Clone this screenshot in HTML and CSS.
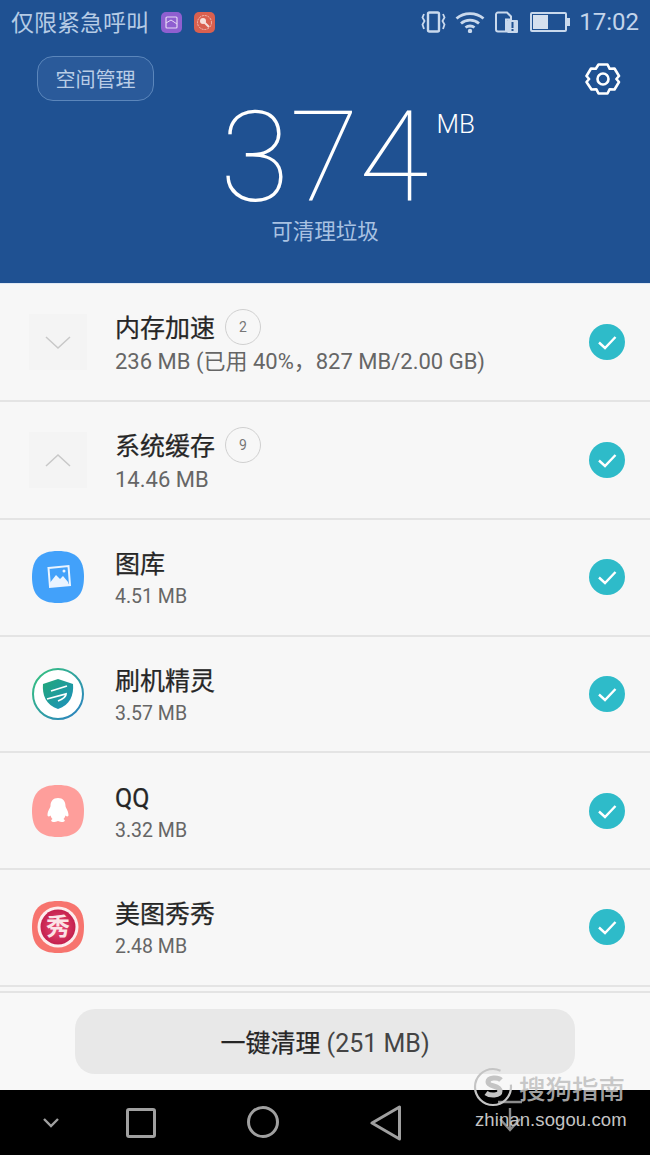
FILE: index.html
```html
<!DOCTYPE html>
<html lang="en">

<head>
    <meta charset="UTF-8">
    <title>手机管家</title>
    <link rel="stylesheet" href="styles.css">
</head>

<body>
    <div class="phone">
        <header class="top">
            <div class="status">
                <div class="status-left">
                    <span class="carrier">仅限紧急呼叫</span>
                    <svg class="note" viewBox="0 0 21 21"><rect width="21" height="21" rx="5" fill="#8f5fd0"/><rect x="5" y="5" width="11" height="11" rx="1" fill="none" stroke="#e6d8f5" stroke-width="1.2"/><path d="M5 11l5-3 6 4" fill="none" stroke="#e6d8f5"/></svg>
                    <svg class="note" viewBox="0 0 21 21"><rect width="21" height="21" rx="5" fill="#d9604f"/><circle cx="10.5" cy="10.5" r="7" fill="none" stroke="#f3c3ba" stroke-dasharray="2 1"/><circle cx="9" cy="9" r="3" fill="#f6e1dc"/><path d="M10 10l5 5" stroke="#f6e1dc" stroke-width="2"/></svg>
                </div>
                <div class="status-right">
                    <svg class="ic-vibrate" viewBox="0 0 25 22" fill="none" stroke="#c9d9ed" stroke-width="2.400"><rect x="7" y="1.500" width="11" height="19" rx="1.500"/><path d="M3 3L1.500 6.500 3.500 10 1.500 13.500 3 18M22 3l1.500 3.500-2 3.500 2 3.500-1.500 4.500" stroke-width="1.800"/></svg>
                    <svg class="ic-wifi" viewBox="0 0 30 22" fill="none" stroke="#c9d9ed" stroke-width="2.800"><path d="M1.500 7.500C9 1 21 1 28.500 7.500M6 12.500c5-4.500 13-4.500 18 0M10.500 16.500c2.500-2 6.500-2 9 0"/><circle cx="15" cy="20" r="2.200" fill="#c9d9ed" stroke="none"/></svg>
                    <svg class="ic-sim" viewBox="0 0 24 22"><path d="M1 3.500A2 2 0 0 1 3 1.500h9l4 4v3h-5v12H3a2 2 0 0 1-2-2z" fill="none" stroke="#c9d9ed" stroke-width="2"/><rect x="12" y="9" width="11" height="13" rx="1" fill="#c9d9ed"/><rect x="16.500" y="11" width="2" height="6" fill="#1f5192"/><rect x="16.500" y="18" width="2" height="2" fill="#1f5192"/></svg>
                    <div class="battery"><div class="battery-level"></div></div>
                    <span class="clock">17:02</span>
                </div>
            </div>
            <div class="tools">
                <button class="manage">空间管理</button>
                <svg class="gear" viewBox="0 0 36 36" fill="none" stroke="#fff" stroke-width="2.600" stroke-linejoin="round"><path d="M13.500 3.500h9l2.200 4.300 4.800-.3 4.500 7.500-2.600 3 2.600 3-4.500 7.500-4.800-.3-2.200 4.300h-9l-2.200-4.300-4.800.3L1.500 21l2.600-3-2.600-3L6 7.500l4.800.3z"/><circle cx="18" cy="18" r="5.500"/></svg>
            </div>
            <div class="total">
                <span class="total-num">374</span>
                <span class="total-unit">MB</span>
            </div>
            <div class="total-label">可清理垃圾</div>
        </header>

        <div class="list">
            <div class="row row-group">
                <div class="thumb">
                    <svg viewBox="0 0 28 16" class="arrow" fill="none" stroke="#c8c8c8" stroke-width="1.500"><path d="M2 3l12 11L26 3"/></svg>
                </div>
                <div class="info">
                    <div class="title-line">
                        <span class="title">内存加速</span>
                        <span class="count">2</span>
                    </div>
                    <div class="size">236 MB (已用 40%，827 MB/2.00 GB)</div>
                </div>
                <svg class="check" viewBox="0 0 36 36"><circle cx="18" cy="18" r="18" fill="#2ebbc9"/><path d="M10 18.500l6 5.500 10.500-11" fill="none" stroke="#fff" stroke-width="2.400"/></svg>
            </div>
            <div class="row row-group">
                <div class="thumb">
                    <svg viewBox="0 0 28 16" class="arrow" fill="none" stroke="#c8c8c8" stroke-width="1.500"><path d="M2 14L14 3l12 11"/></svg>
                </div>
                <div class="info">
                    <div class="title-line">
                        <span class="title">系统缓存</span>
                        <span class="count">9</span>
                    </div>
                    <div class="size">14.46 MB</div>
                </div>
                <svg class="check" viewBox="0 0 36 36"><circle cx="18" cy="18" r="18" fill="#2ebbc9"/><path d="M10 18.500l6 5.500 10.500-11" fill="none" stroke="#fff" stroke-width="2.400"/></svg>
            </div>
            <div class="row">
                <div class="thumb thumb-app">
                    <svg viewBox="0 0 52 52"><path d="M26 0C44 0 52 8 52 26S44 52 26 52 0 44 0 26 8 0 26 0z" fill="#42a1fa"/><path d="M16.500 17l20-2 1.500 19-20 2z" fill="none" stroke="#eaf4ff" stroke-width="2"/><path d="M17 33l7-9 4 4 3-3 5 6 1 3-19 2z" fill="#eaf4ff"/><circle cx="32" cy="20" r="1.500" fill="#eaf4ff"/></svg>
                </div>
                <div class="info info-app">
                    <div class="title">图库</div>
                    <div class="size size-app">4.51 MB</div>
                </div>
                <svg class="check" viewBox="0 0 36 36"><circle cx="18" cy="18" r="18" fill="#2ebbc9"/><path d="M10 18.500l6 5.500 10.500-11" fill="none" stroke="#fff" stroke-width="2.400"/></svg>
            </div>
            <div class="row">
                <div class="thumb thumb-app">
                    <svg viewBox="0 0 52 52"><defs><linearGradient id="ring" x1="0" y1="0" x2="1" y2="1"><stop offset="0" stop-color="#36c47c"/><stop offset="1" stop-color="#2b7fc4"/></linearGradient><linearGradient id="shield" x1="0" y1="0" x2="1" y2="1"><stop offset="0" stop-color="#22a878"/><stop offset="1" stop-color="#1c8fc0"/></linearGradient></defs><circle cx="26" cy="26" r="25" fill="#fff" stroke="url(#ring)" stroke-width="2"/><path d="M26 11l15 5c1 11-3 21-15 25C14 37 10 27 11 16z" fill="url(#shield)"/><path d="M19 23l16-5M15 31l19-5c0 3-3 5-8 7" fill="none" stroke="#fff" stroke-width="1.800"/></svg>
                </div>
                <div class="info info-app">
                    <div class="title">刷机精灵</div>
                    <div class="size size-app">3.57 MB</div>
                </div>
                <svg class="check" viewBox="0 0 36 36"><circle cx="18" cy="18" r="18" fill="#2ebbc9"/><path d="M10 18.500l6 5.500 10.500-11" fill="none" stroke="#fff" stroke-width="2.400"/></svg>
            </div>
            <div class="row">
                <div class="thumb thumb-app">
                    <svg viewBox="0 0 52 52"><path d="M26 0C44 0 52 8 52 26S44 52 26 52 0 44 0 26 8 0 26 0z" fill="#fe9e9b"/><path d="M26 13c5 0 7.500 3.500 7.500 8 0 2 3 4.500 3 9 0 2-2 1.500-3 .5-.5 1.500-1 2.500-2 3.500 2 1 2 3-2 3-2 0-2.500-1-3.500-1s-1.500 1-3.500 1c-4 0-4-2-2-3-1-1-1.500-2-2-3.500-1 1-3 1.500-3-.5 0-4.500 3-7 3-9 0-4.500 2.500-8 7.500-8z" fill="#fff"/></svg>
                </div>
                <div class="info info-app">
                    <div class="title">QQ</div>
                    <div class="size size-app">3.32 MB</div>
                </div>
                <svg class="check" viewBox="0 0 36 36"><circle cx="18" cy="18" r="18" fill="#2ebbc9"/><path d="M10 18.500l6 5.500 10.500-11" fill="none" stroke="#fff" stroke-width="2.400"/></svg>
            </div>
            <div class="row">
                <div class="thumb thumb-app meitu">
                    <svg viewBox="0 0 52 52"><defs><radialGradient id="mt"><stop offset="0" stop-color="#ea4e78"/><stop offset="1" stop-color="#c4204d"/></radialGradient></defs><path d="M26 0C44 0 52 8 52 26S44 52 26 52 0 44 0 26 8 0 26 0z" fill="#f7746e"/><circle cx="26" cy="26" r="20.500" fill="#fdeeee"/><circle cx="26" cy="26" r="17.500" fill="url(#mt)"/></svg>
                    <span class="meitu-char">秀</span>
                </div>
                <div class="info info-app">
                    <div class="title">美图秀秀</div>
                    <div class="size size-app">2.48 MB</div>
                </div>
                <svg class="check" viewBox="0 0 36 36"><circle cx="18" cy="18" r="18" fill="#2ebbc9"/><path d="M10 18.500l6 5.500 10.500-11" fill="none" stroke="#fff" stroke-width="2.400"/></svg>
            </div>
        </div>

        <div class="bottom">
            <button class="clean"><span class="clean-name">一键清理</span> (251 MB)</button>
        </div>

        <nav class="nav">
            <svg class="nav-down" viewBox="0 0 18 12" fill="none" stroke="#a0a0a0" stroke-width="2.400"><path d="M2 2l7 7 7-7"/></svg>
            <svg class="nav-square" viewBox="0 0 30 30" fill="none" stroke="#a0a0a0" stroke-width="3"><rect x="1.500" y="1.500" width="27" height="27" rx="1.500"/></svg>
            <svg class="nav-circle" viewBox="0 0 32 32" fill="none" stroke="#a0a0a0" stroke-width="3"><circle cx="16" cy="16" r="14.500"/></svg>
            <svg class="nav-back" viewBox="0 0 32 36" fill="none" stroke="#a0a0a0" stroke-width="3" stroke-linejoin="round"><path d="M29.500 2v32L2 18z"/></svg>
            <svg class="nav-dl" viewBox="0 0 28 36" fill="none" stroke="#8c8c8c" stroke-width="2.400"><path d="M2 2h24M14 8v22M4 19l10 11 10-11"/></svg>
        </nav>

        <div class="watermark">
            <div class="wm-top">
                <svg class="wm-logo" viewBox="0 0 40 40" fill="none" stroke="#c4c4c4"><circle cx="20" cy="20" r="18" stroke-width="2.200" stroke-dasharray="92 18"/><path d="M28 13c-3-3-13-3-13 2 0 5 12 3 12 9 0 5-10 5-14 2" stroke-width="5"/></svg>
                <span class="wm-name">搜狗指南</span>
            </div>
            <div class="wm-url">zhinan.sogou.com</div>
        </div>
    </div>
</body>

</html>
```

FILE: styles.css
```css
* {
    box-sizing: border-box;
}

body {
    margin: 0;
    background-color: #f7f7f7;
    font-family: 'Roboto', 'Noto Sans CJK SC', sans-serif;
}

.phone {
    position: relative;
    width: 650px;
    height: 1155px;
    overflow: hidden;
    display: flex;
    flex-direction: column;
}

/* blue header */
.top {
    height: 284px;
    flex: none;
    background-color: #1f5192;
    border-bottom: 1px solid #dfe8f3;
    display: flex;
    flex-direction: column;
}

.status {
    height: 44px;
    flex: none;
    padding: 0 11px;
    display: flex;
    justify-content: space-between;
    align-items: center;
    color: #bdd0e8;
}

.status-left {
    display: flex;
    align-items: center;
}

.carrier {
    font-size: 23px;
    line-height: 26px;
    margin-top: 4px;
    margin-right: 12px;
    color: #b5cbe5;
}

.note {
    width: 21px;
    height: 21px;
    margin-right: 12px;
}

.status-right {
    display: flex;
    align-items: center;
}

.ic-vibrate {
    width: 25px;
    height: 22px;
    margin-right: 9px;
}

.ic-wifi {
    width: 30px;
    height: 22px;
    margin-right: 10px;
}

.ic-sim {
    width: 24px;
    height: 22px;
    margin-right: 11px;
}

.battery {
    position: relative;
    width: 37px;
    height: 20px;
    border: 2px solid #c9d9ed;
    border-radius: 2px;
    padding: 1px;
    margin-right: 12px;
}

.battery::after {
    content: "";
    position: absolute;
    right: -5px;
    top: 4px;
    width: 3px;
    height: 8px;
    background-color: #c9d9ed;
}

.battery-level {
    width: 15px;
    height: 100%;
    background-color: #d5e0ee;
}

.clock {
    font-size: 24px;
    color: #c3d4ea;
}

.tools {
    height: 45px;
    flex: none;
    margin-top: 12px;
    padding: 0 29px 0 37px;
    display: flex;
    justify-content: space-between;
    align-items: flex-start;
}

.manage {
    width: 117px;
    height: 45px;
    padding: 0;
    background-color: #2a5a9a;
    border: 1px solid #5b86bb;
    border-radius: 16px;
    color: #b9cde6;
    font-family: inherit;
    font-size: 20px;
}

.gear {
    width: 36px;
    height: 36px;
    margin-top: 5px;
}

.total {
    height: 120px;
    flex: none;
    margin-top: -3px;
    display: flex;
    justify-content: center;
    color: #fff;
}

.total-num {
    font-size: 127px;
    font-weight: 100;
    line-height: 120px;
    margin-left: 45px;
}

.total-unit {
    font-size: 26px;
    font-weight: 300;
    line-height: 30px;
    margin-top: 11px;
    margin-left: 8px;
}

.total-label {
    margin-top: 1px;
    text-align: center;
    font-size: 21.5px;
    line-height: 26px;
    color: #a9c2e2;
}

/* rows */
.list {
    height: 709px;
    flex: none;
    background-color: #f7f7f7;
    border-bottom: 2px solid #e4e4e4;
}

.row {
    height: 116.67px;
    padding: 0 25px 0 29px;
    display: flex;
    align-items: center;
    border-bottom: 2px solid #e4e4e4;
}

.row-group {
    height: 118px;
}

.thumb {
    position: relative;
    width: 58px;
    height: 56px;
    flex: none;
    margin-right: 28px;
    display: flex;
    align-items: center;
    justify-content: center;
    background-color: #f4f4f4;
}

.thumb-app {
    background: none;
}

.thumb-app svg {
    width: 52px;
    height: 52px;
}

.arrow {
    width: 28px;
    height: 16px;
}

.meitu-char {
    position: absolute;
    left: 0;
    right: 0;
    text-align: center;
    color: #fbe3e6;
    font-size: 24px;
    font-weight: 700;
    line-height: 56px;
}

.info {
    flex: 1;
    padding-top: 4px;
}

.info-app {
    padding-top: 5px;
}

.title-line {
    display: flex;
    align-items: center;
    height: 36px;
}

.title {
    font-size: 25px;
    line-height: 34px;
    color: #262626;
    -webkit-text-stroke: 0.25px #262626;
}

.count {
    width: 36px;
    height: 36px;
    margin-left: 10px;
    margin-top: -4px;
    border: 1px solid #d0d0d0;
    border-radius: 50%;
    text-align: center;
    font-size: 14px;
    line-height: 34px;
    color: #777;
}

.size {
    font-size: 22px;
    line-height: 30px;
    color: #666;
}

.size-app {
    font-size: 19.5px;
    line-height: 29px;
}

.check {
    width: 36px;
    height: 36px;
    flex: none;
}

/* clean button */
.bottom {
    height: 97px;
    flex: none;
    padding-top: 16px;
    display: flex;
    justify-content: center;
    align-items: flex-start;
    background-color: #f8f8f8;
}

.clean {
    width: 500px;
    height: 65px;
    padding-bottom: 3px;
    background-color: #e8e8e8;
    border: none;
    border-radius: 20px;
    font-family: inherit;
    font-size: 25px;
    color: #444;
}

.clean-name {
    color: #262626;
    -webkit-text-stroke: 0.25px #262626;
}

/* nav bar */
.nav {
    position: relative;
    height: 65px;
    flex: none;
    background-color: #000;
}

.nav svg {
    position: absolute;
}

.nav-down {
    left: 42px;
    top: 27px;
    width: 18px;
    height: 12px;
}

.nav-square {
    left: 126px;
    top: 18px;
    width: 30px;
    height: 30px;
}

.nav-circle {
    left: 247px;
    top: 16px;
    width: 32px;
    height: 32px;
}

.nav-back {
    left: 370px;
    top: 15px;
    width: 32px;
    height: 36px;
}

.nav-dl {
    left: 496px;
    top: 10px;
    width: 28px;
    height: 36px;
}

/* watermark over everything */
.watermark {
    position: absolute;
    left: 473px;
    top: 1066px;
    width: 156px;
    color: #c4c4c4;
}

.wm-top {
    display: flex;
    align-items: center;
    height: 42px;
}

.wm-logo {
    width: 40px;
    height: 40px;
    margin-right: 6px;
}

.wm-name {
    font-size: 26.5px;
    font-weight: 500;
    color: rgba(190, 190, 190, 0.85);
    white-space: nowrap;
}

.wm-url {
    font-family: 'Liberation Sans', sans-serif;
    font-size: 18.500px;
    line-height: 24px;
    padding-left: 2px;
    letter-spacing: 0.1px;
    white-space: nowrap;
}
```
